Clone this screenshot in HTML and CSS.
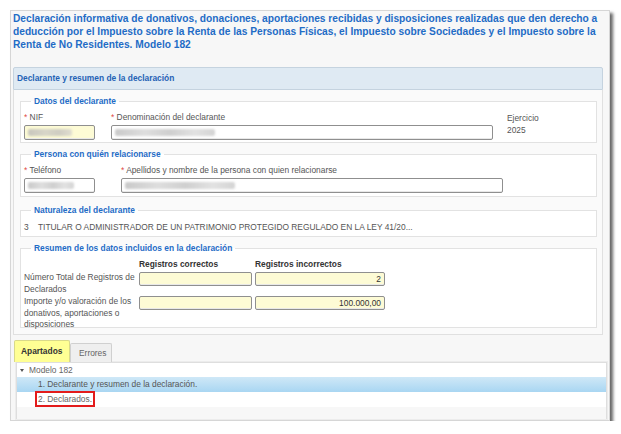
FILE: index.html
```html
<!DOCTYPE html>
<html lang="es">
<head>
<meta charset="utf-8">
<link rel="stylesheet" href="styles.css">
</head>
<body>
<div class="window">
  <h1 class="title">Declaración informativa de donativos, donaciones, aportaciones recibidas y disposiciones realizadas que den derecho a deducción por el Impuesto sobre la Renta de las Personas Físicas, el Impuesto sobre Sociedades y el Impuesto sobre la Renta de No Residentes. Modelo 182</h1>

  <div class="panel">
    <div class="panel-head">Declarante y resumen de la declaración</div>
    <div class="panel-body">
      <fieldset class="fs fs-datos">
        <legend>Datos del declarante</legend>
        <div class="row">
          <div class="field f-nif">
            <label><span class="req">*</span> NIF</label>
            <div class="inp yellow"><span class="blur b1"></span></div>
          </div>
          <div class="field f-den">
            <label><span class="req">*</span> Denominación del declarante</label>
            <div class="inp"><span class="blur b2"></span></div>
          </div>
          <div class="field f-ej">
            <span>Ejercicio</span>
            <span class="ej-val">2025</span>
          </div>
        </div>
      </fieldset>

      <fieldset class="fs fs-persona">
        <legend>Persona con quién relacionarse</legend>
        <div class="row">
          <div class="field f-tel">
            <label><span class="req">*</span> Teléfono</label>
            <div class="inp"><span class="blur b3"></span></div>
          </div>
          <div class="field f-ape">
            <label><span class="req">*</span> Apellidos y nombre de la persona con quien relacionarse</label>
            <div class="inp"><span class="blur b4"></span></div>
          </div>
        </div>
      </fieldset>

      <fieldset class="fs fs-nat">
        <legend>Naturaleza del declarante</legend>
        <div class="nat"><span class="nat-num">3</span><span>TITULAR O ADMINISTRADOR DE UN PATRIMONIO PROTEGIDO REGULADO EN LA LEY 41/20...</span></div>
      </fieldset>

      <fieldset class="fs fs-res">
        <legend>Resumen de los datos incluidos en la declaración</legend>
        <div class="grid">
          <div></div>
          <div class="colh">Registros correctos</div>
          <div class="colh">Registros incorrectos</div>

          <div class="rlabel">Número Total de Registros de Declarados</div>
          <div class="inp yellow num"></div>
          <div class="inp yellow num">2</div>

          <div class="rlabel">Importe y/o valoración de los donativos, aportaciones o disposiciones</div>
          <div class="inp yellow num"></div>
          <div class="inp yellow num">100.000,00</div>
        </div>
      </fieldset>
    </div>
  </div>

  <div class="tabs">
    <div class="tabbar">
      <div class="tab active">Apartados</div>
      <div class="tab">Errores</div>
    </div>
    <div class="tree">
      <div class="node root"><span class="arrow"></span>Modelo 182</div>
      <div class="node leaf selected">1. Declarante y resumen de la declaración.</div>
      <div class="node leaf"><span class="mark">2. Declarados.</span></div>
      <div class="tree-foot"></div>
    </div>
  </div>
</div>
</body>
</html>
```

FILE: styles.css
```css
* { box-sizing: border-box; }
html, body { margin: 0; padding: 0; background: #fff; }
body {
  font-family: "Liberation Sans", Arial, sans-serif;
  font-size: 8.4px;
  color: #555;
  padding: 10px 0 0 10px;
}
.window {
  width: 600px;
  height: 411px;
  background: #f7f7f7;
  border: 1px solid #d6d6d6;
  box-shadow: 3px 3px 3px rgba(0,0,0,0.6);
  padding: 1px 2px 0 2px;
}
.title {
  margin: 0;
  font-size: 10.2px;
  font-weight: bold;
  line-height: 13px;
  color: #1f6cc6;
  height: 55px;
}
.panel { width: 590px; }
.panel-head {
  height: 23px;
  background: #dfeaf3;
  border: 1px solid #c5d3df;
  border-radius: 2px 2px 0 0;
  font-weight: bold;
  color: #1f62b5;
  line-height: 21px;
  padding-left: 3px;
}
.panel-body {
  background: #fafafa;
  border: 1px solid #e0e0e0;
  border-top: none;
  padding: 6px 5px 6px 6px;
  display: flex;
  flex-direction: column;
  gap: 6px;
}
.fs {
  margin: 0;
  border: 1px solid #e2e2e2;
  background: #fff;
  padding: 0 2px 3px 2px;
  min-width: 0;
}
.fs legend {
  font-weight: bold;
  color: #1f6cc6;
  padding: 0 3px;
  margin-left: 8px;
  line-height: 11px;
  font-size: 8.4px;
}
.row { display: flex; align-items: flex-start; }
.field { display: flex; flex-direction: column; }
.field label { line-height: 11px; height: 11px; margin-top: 5px; }
.req { color: #e0483f; }
.inp {
  height: 15px;
  border: 1px solid #8f8f8f;
  border-radius: 2px;
  background: #fff;
  box-shadow: inset 0 -1px 0 #e8e8e8;
  position: relative;
  overflow: hidden;
}
.field .inp { margin-top: 2px; }
.yellow { background: #fdfbd5; }
.blur {
  position: absolute;
  top: 3px;
  left: 3px;
  height: 7px;
  background: linear-gradient(90deg, #c9c9c9, #dedede 30%, #cfcfcf 55%, #e2e2e2 80%, #d4d4d4);
  filter: blur(1.2px);
  border-radius: 2px;
}
.b1 { width: 44px; background: linear-gradient(90deg,#c8c6bd,#d8d6c8 40%,#cfcdc2 70%,#e0ddd0); }
.b2 { width: 100px; }
.b3 { width: 46px; }
.b4 { width: 110px; }
.f-nif { margin-left: 1px; width: 71px; }
.f-den { margin-left: 16px; width: 382px; }
.f-ej { margin-left: 14px; line-height: 12px; margin-top: 5px; }
.f-tel { margin-left: 1px; width: 71px; }
.f-ape { margin-left: 26px; width: 382px; }
.fs-datos { height: 47px; }
.fs-persona { height: 48px; }
.fs-nat { height: 32px; margin-top: 2px; }
.fs-res { height: 85px; }
.nat { display: flex; line-height: 12px; margin-top: 5px; padding-left: 1px; }
.nat-num { width: 14px; }
.grid {
  display: grid;
  grid-template-columns: 113px 113px 130px;
  column-gap: 3px;
  align-items: start;
  margin-top: 4px;
}
.colh { font-weight: bold; color: #333; line-height: 12px; height: 14px; }
.rlabel { line-height: 11.5px; padding-left: 1px; margin-bottom: 1px; }
.grid .inp { margin-top: 0px; height: 14px; }
.num { text-align: right; padding-right: 3px; line-height: 12px; color: #333; }
.tabs { margin-top: 5px; }
.tabbar { display: flex; align-items: flex-end; height: 22px; padding-left: 1px; }
.tab {
  height: 19px;
  padding: 0 8px;
  border: 1px solid #d0d0d0;
  border-bottom: none;
  border-radius: 2px 2px 0 0;
  background: #efefef;
  color: #666;
  line-height: 18px;
  width: 42px;
}
.tab.active {
  height: 22px;
  width: 56px;
  background: #ffff94;
  border-color: #d9d98a;
  color: #333;
  font-weight: bold;
  line-height: 20px;
  padding: 0 6px;
}
.tree {
  margin-left: 3px;
  width: 591px;
  height: 57px;
  border: 1px solid #dedede;
  background: #fff;
  box-shadow: 0 0 0 1px #ececec;
}
.node { height: 14px; line-height: 14px; color: #666; }
.root { padding-left: 3px; }
.arrow {
  display: inline-block;
  width: 0; height: 0;
  border-left: 2.5px solid transparent;
  border-right: 2.5px solid transparent;
  border-top: 3px solid #555;
  margin-right: 5px;
  vertical-align: 1px;
}
.leaf { padding-left: 21px; }
.selected {
  height: 15px;
  line-height: 15px;
  background: linear-gradient(#cfe8f7, #a9d6f2);
  color: #555;
}
.mark {
  display: inline-block;
  border: 2px solid #e31b1b;
  line-height: 12px;
  padding: 0 1px;
  margin-left: -3px;
  height: 16px;
  margin-top: -1px;
}
.tree-foot { height: 12px; margin-top: 1px; background: #f7f7f7; }
```
